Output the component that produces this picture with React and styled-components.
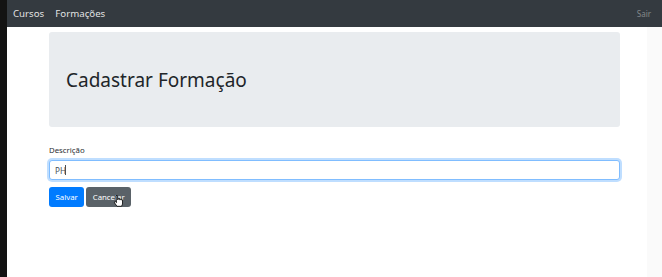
import React from "react";
import styled, { createGlobalStyle } from "styled-components";

const Global = createGlobalStyle`
  html, body { margin: 0; padding: 0; background: #fff; }
  body { font-family: "Noto Sans", "Open Sans", sans-serif; color: #212529; }
  * { box-sizing: border-box; }
`;

const Screen = styled.div`
  display: flex;
  width: 662px;
  height: 277px;
  overflow: hidden;
`;

const SideStrip = styled.div`
  width: 7px;
  background: #131313;
  flex: none;
`;

const Main = styled.div`
  flex: 1;
  display: flex;
  flex-direction: column;
  position: relative;
`;

const Navbar = styled.nav`
  height: 27px;
  background: #343a40;
  display: flex;
  align-items: center;
  padding: 0 11px 0 6px;
  flex: none;
`;

const NavLink = styled.a`
  color: ${(p) => (p.$muted ? "rgba(255,255,255,0.4)" : "rgba(255,255,255,0.88)")};
  font-size: ${(p) => (p.$small ? "8px" : "9.7px")};
  text-decoration: none;
  margin-right: ${(p) => (p.$gap ? p.$gap : "0")};
  margin-left: ${(p) => (p.$push ? "auto" : "0")};
  line-height: 1;
`;

const Body = styled.div`
  flex: 1;
  display: flex;
`;

const Container = styled.div`
  width: 571px;
  margin-left: 42px;
  padding-top: 5px;
  display: flex;
  flex-direction: column;
`;

const ScrollTrack = styled.div`
  width: 15px;
  margin-left: auto;
  background: #fafafa;
`;

const Jumbotron = styled.div`
  height: 95px;
  background: #e9ecef;
  border-radius: 3px;
  padding: 0 17px;
  display: flex;
  align-items: center;
`;

const Title = styled.h1`
  margin: 0;
  margin-top: 1px;
  font-size: 19px;
  font-weight: 400;
  color: #212529;
`;

const Form = styled.form`
  margin-top: 17px;
  display: flex;
  flex-direction: column;
`;

const Label = styled.label`
  font-size: 7.8px;
  color: #2b2f33;
  line-height: 12px;
  margin-bottom: 4px;
`;

const FieldWrap = styled.div`
  position: relative;
`;

const Input = styled.input`
  display: block;
  width: 100%;
  height: 20px;
  border: 1px solid #80bdff;
  border-radius: 3px;
  box-shadow: 0 0 0 2px rgba(0, 123, 255, 0.25);
  padding: 0 5px;
  font-family: inherit;
  font-size: 8.2px;
  color: #495057;
  outline: none;
  background: #fff;
`;

const Caret = styled.span`
  position: absolute;
  left: 16px;
  top: 5px;
  width: 1px;
  height: 10px;
  background: #495057;
`;

const Actions = styled.div`
  display: flex;
  gap: 2px;
  margin-top: 7px;
`;

const Button = styled.button`
  height: 20px;
  padding: 0 6.5px;
  border: none;
  border-radius: 3px;
  font-family: inherit;
  font-size: 7.8px;
  color: #fff;
  background: ${(p) => (p.$variant === "secondary" ? "#5a6268" : "#007bff")};
  position: relative;
  cursor: pointer;
`;

const Cursor = styled.svg`
  position: absolute;
  left: 27px;
  top: 8px;
`;

export default function App() {
  return (
    <>
      <Global />
      <Screen>
        <SideStrip />
        <Main>
          <Navbar>
            <NavLink $gap="11px">Cursos</NavLink>
            <NavLink>Formações</NavLink>
            <NavLink $push $muted $small>Sair</NavLink>
          </Navbar>
          <Body>
            <Container>
              <Jumbotron>
                <Title>Cadastrar Formação</Title>
              </Jumbotron>
              <Form onSubmit={(e) => e.preventDefault()}>
                <Label>Descrição</Label>
                <FieldWrap>
                  <Input defaultValue="PH" readOnly />
                  <Caret />
                </FieldWrap>
                <Actions>
                  <Button type="submit">Salvar</Button>
                  <Button type="button" $variant="secondary">
                    Cancelar
                    <Cursor width="10" height="12" viewBox="0 0 10 12">
                      <path
                        d="M3 0.5 h1.3 v4 h1 v-1 h1.2 v1.2 h1 v-0.6 h1.2 v1 h0.8 v4 l-1 2.2 h-4.5 l-2.5 -3.5 v-1 h1.2 l0.8 0.8 z"
                        fill="#fff"
                        stroke="#000"
                        strokeWidth="0.8"
                        strokeLinejoin="round"
                      />
                    </Cursor>
                  </Button>
                </Actions>
              </Form>
            </Container>
            <ScrollTrack />
          </Body>
        </Main>
      </Screen>
    </>
  );
}
